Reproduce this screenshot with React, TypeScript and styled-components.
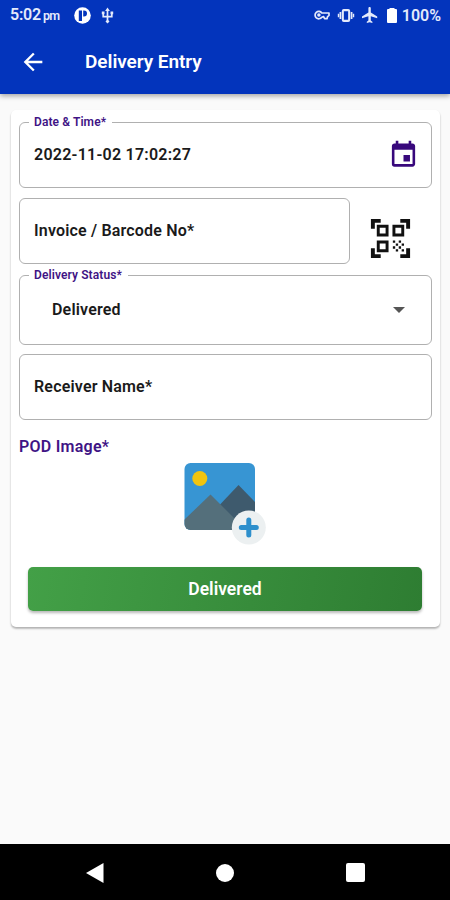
import React from "react";
import styled, { createGlobalStyle } from "styled-components";

const GlobalStyle = createGlobalStyle`
  * { box-sizing: border-box; }
  body { margin: 0; background: #fafafa; font-family: Roboto, "Liberation Sans", sans-serif; }
`;

const Screen = styled.div`
  width: 450px;
  height: 900px;
  display: flex;
  flex-direction: column;
  background: #fafafa;
  overflow: hidden;
`;

const Header = styled.header`
  height: 94px;
  flex: none;
  background: #0334bc;
  color: #fff;
  box-shadow: 0 2px 5px rgba(0, 0, 0, 0.35);
`;

const StatusBar = styled.div`
  height: 30px;
  display: flex;
  align-items: center;
  padding: 0 9px 0 10px;
  color: #e4eafb;
`;

const Clock = styled.span`
  font-size: 16px;
  font-weight: 600;
  line-height: 30px;
  padding-top: 1px;
  white-space: nowrap;
  width: 64px;
  letter-spacing: -0.2px;
`;

const Meridiem = styled.span`
  font-size: 12.5px;
  margin-left: 2px;
  letter-spacing: -0.7px;
`;

const StatusIcon = styled.svg<{ $gap?: number }>`
  flex: none;
  display: block;
  margin-left: ${(p) => p.$gap ?? 0}px;
`;

const Battery = styled.span`
  font-size: 16px;
  font-weight: 600;
  margin-left: 5px;
  letter-spacing: 0;
`;

const Spacer = styled.div`
  flex: 1;
`;

const AppBar = styled.div`
  height: 64px;
  display: flex;
  align-items: center;
  padding-left: 19px;
`;

const Title = styled.h1`
  margin: 0 0 0 38px;
  font-size: 19px;
  font-weight: 600;
  line-height: 28px;
  letter-spacing: -0.05px;
  white-space: nowrap;
`;

const Card = styled.main`
  margin: 16px 10px 0 11px;
  height: 517px;
  padding: 12px 8px 0;
  flex: none;
  display: flex;
  flex-direction: column;
  background: #fff;
  border-radius: 5px;
  box-shadow: 0 2px 2px rgba(0, 0, 0, 0.22), 0 1px 2px rgba(0, 0, 0, 0.1);
`;

const Row = styled.div`
  display: flex;
  align-items: center;
  margin-bottom: 11px;
`;

const Field = styled.div<{ $height: number; $width?: number; $gap?: number; $indent?: number; $end?: number }>`
  position: relative;
  flex: none;
  display: flex;
  align-items: center;
  justify-content: space-between;
  width: ${(p) => (p.$width ? `${p.$width}px` : "auto")};
  height: ${(p) => p.$height}px;
  margin-bottom: ${(p) => p.$gap ?? 0}px;
  padding: 0 ${(p) => p.$end ?? 12}px 1px ${(p) => p.$indent ?? 14}px;
  border: 1px solid #b0b0b0;
  border-radius: 6px;
`;

const FieldLabel = styled.span`
  position: absolute;
  left: 9px;
  top: -9px;
  padding: 0 6px 0 5px;
  background: #fff;
  color: #3f1485;
  font-size: 12px;
  font-weight: 600;
  line-height: 16px;
  letter-spacing: 0.1px;
  white-space: nowrap;
`;

const FieldText = styled.span`
  color: #1a1a1a;
  font-size: 16px;
  font-weight: 600;
  line-height: 20px;
  letter-spacing: 0.18px;
  white-space: nowrap;
`;

const DateText = styled(FieldText)`
  letter-spacing: 0.25px;
`;

const ScanButton = styled.button`
  margin: 14px 0 0 17px;
  padding: 0;
  border: 0;
  background: none;
  height: 47px;
  display: block;
`;

const SectionLabel = styled.div`
  margin-top: 17px;
  color: #3f1485;
  font-size: 16px;
  font-weight: 600;
  line-height: 20px;
  letter-spacing: 0.25px;
`;

const PictureButton = styled.button`
  align-self: center;
  margin: 5px 1px 0 0;
  padding: 0;
  border: 0;
  background: none;
  height: 83px;
  display: block;
`;

const SubmitButton = styled.button`
  margin: 22px 10px 0 9px;
  height: 44px;
  padding: 0;
  border: 0;
  border-radius: 5px;
  background: linear-gradient(100deg, #43a047, #2e7d32);
  box-shadow: 0 2px 3px rgba(0, 0, 0, 0.28);
  color: #fff;
  font-family: inherit;
  font-size: 17.5px;
  font-weight: 600;
`;

const NavBar = styled.nav`
  height: 56px;
  flex: none;
  margin-top: auto;
  background: #000;
  display: flex;
  justify-content: space-between;
  align-items: center;
  padding: 1px 85px 0 86px;
`;

export default function App() {
  return (
    <Screen>
      <GlobalStyle />
      <Header>
        <StatusBar>
          <Clock>5:02<Meridiem>pm</Meridiem></Clock>
          <StatusIcon width="17" height="17" viewBox="0 0 17 17">
            <circle cx="8.5" cy="8.5" r="8.3" fill="#fff" />
            <path d="M4.800 3.500H8v10.500H4.800zM9.200 3.500h.8a3 3 0 0 1 0 6H9.200z" fill="#0334bc" />
          </StatusIcon>
          <StatusIcon $gap={10} width="13" height="17" viewBox="0 0 13 17" fill="none" stroke="currentColor" strokeWidth="1.7">
            <path d="M6.5 3v12M2.200 6v3.600h8.600V6" />
            <path d="M6.500.5l2.400 3.400H4.100zM6.500 12.500l2 2-2 2-2-2zM.8 4.500h2.700v2.700H.8zM9.500 4.500h2.700v2.700H9.500z" fill="currentColor" stroke="none" />
          </StatusIcon>
          <Spacer />
          <StatusIcon width="16" height="10" viewBox="0 0 16 10" fill="none" stroke="currentColor" strokeWidth="1.7">
            <path d="M7.800 3A3.700 3.700 0 1 0 7.800 7.200L9.600 6.600 10.600 8.700h2.400L13.600 6.600 15 5.400V3z" strokeLinejoin="round" />
            <circle cx="4.900" cy="5" r=".9" />
          </StatusIcon>
          <StatusIcon $gap={7} width="18" height="13" viewBox="0 0 18 14" fill="none" stroke="currentColor">
            <rect x="5.600" y="1.200" width="6.800" height="11.600" rx="1" strokeWidth="2.200" />
            <path d="M3 3.200v7.600M15 3.200v7.600" strokeWidth="1.900" />
            <path d="M.9 5.200v3.600M17.100 5.200v3.600" strokeWidth="1.500" />
          </StatusIcon>
          <StatusIcon $gap={7} width="16" height="16" viewBox="2 2 20 20">
            <path d="M21 16v-2l-8-5V3.500c0-.83-.67-1.500-1.500-1.500S10 2.670 10 3.500V9l-8 5v2l8-2.500V19l-2 1.500V22l3.500-1 3.500 1v-1.500L13 19v-5.500l8 2.500z" fill="currentColor" />
          </StatusIcon>
          <StatusIcon $gap={9} width="10" height="15" viewBox="0 0 10 15">
            <path d="M2.500 1V0h5v1H9a1 1 0 0 1 1 1v12a1 1 0 0 1-1 1H1a1 1 0 0 1-1-1V2a1 1 0 0 1 1-1z" fill="#fff" />
          </StatusIcon>
          <Battery>100%</Battery>
        </StatusBar>
        <AppBar>
          <svg width="28" height="28" viewBox="0 0 24 24" fill="#fff">
            <path d="M20 11H7.830l5.590-5.590L12 4l-8 8 8 8 1.410-1.410L7.830 13H20v-2z" />
          </svg>
          <Title>Delivery Entry</Title>
        </AppBar>
      </Header>
      <Card>
        <Field $height={66} $gap={10}>
          <FieldLabel>Date &amp; Time*</FieldLabel>
          <DateText>2022-11-02 17:02:27</DateText>
          <svg width="31" height="32" viewBox="0 0 24 24" fill="#38087c">
            <path d="M17 12h-5v5h5v-5zM16 1v2H8V1H6v2H5c-1.110 0-1.990.9-1.990 2L3 19a2 2 0 0 0 2 2h14c1.100 0 2-.9 2-2V5c0-1.100-.9-2-2-2h-1V1h-2zm3 18H5V8h14v11z" />
          </svg>
        </Field>
        <Row>
          <Field $height={66} $width={331}>
            <FieldText>Invoice / Barcode No*</FieldText>
          </Field>
          <ScanButton aria-label="Scan barcode">
            <svg width="47" height="47" viewBox="0 0 24 24" fill="#111">
              <path d="M9.500 6.500v3h-3v-3h3M11 5H5v6h6V5zm-1.500 9.500v3h-3v-3h3M11 13H5v6h6v-6zm6.500-6.500v3h-3v-3h3M19 5h-6v6h6V5zM22 7h-2V4h-3V2h5v5zm0 15v-5h-2v3h-3v2h5zM2 22h5v-2H4v-3H2v5zM2 2v5h2V4h3V2H2z" />
              <path d="M13.200 13h1.200v1.200h-1.200zM16.200 13h1.200v1.200h-1.200zM14.700 14.500h1.200v1.200h-1.200zM17.700 14.500h1.200v1.200h-1.200zM13.200 16h1.200v1.200h-1.200zM16.200 16h1.200v1.200h-1.200zM14.700 17.500h1.200v1.200h-1.200zM17.700 17.500h1.200v1.200h-1.200z" />
            </svg>
          </ScanButton>
        </Row>
        <Field $height={70} $gap={9} $indent={32} $end={26}>
          <FieldLabel>Delivery Status*</FieldLabel>
          <FieldText>Delivered</FieldText>
          <svg width="12" height="6" viewBox="0 0 12 6">
            <path d="M0 0h12L6 6z" fill="#555" />
          </svg>
        </Field>
        <Field $height={66}>
          <FieldText>Receiver Name*</FieldText>
        </Field>
        <SectionLabel>POD Image*</SectionLabel>
        <PictureButton aria-label="Add image">
          <svg width="82" height="83" viewBox="0 0 82 83">
            <defs>
              <clipPath id="frame"><rect x="0.500" y="1" width="70.500" height="67" rx="6" /></clipPath>
            </defs>
            <g clipPath="url(#frame)">
              <rect y="1" width="71" height="67" fill="#3795d3" />
              <path d="M29 50L54.500 23 71 40v28H29z" fill="#3e5a6d" />
              <path d="M-1 59L26.500 32.500 62 68H-1z" fill="#546f7b" />
            </g>
            <circle cx="15.800" cy="16.500" r="7.500" fill="#f1c40f" />
            <circle cx="64.800" cy="65.500" r="17" fill="#ecf0f1" />
            <path d="M64.800 58v15M57.300 65.500h15" stroke="#2d8fcc" strokeWidth="5" strokeLinecap="round" />
          </svg>
        </PictureButton>
        <SubmitButton>Delivered</SubmitButton>
      </Card>
      <NavBar>
        <svg width="18" height="20" viewBox="0 0 18 20"><path d="M0 10L17.500 0v20z" fill="#fff" /></svg>
        <svg width="18" height="18" viewBox="0 0 18 18"><circle cx="9" cy="9" r="9" fill="#fff" /></svg>
        <svg width="19" height="19" viewBox="0 0 19 19"><rect width="19" height="19" rx="2" fill="#fff" /></svg>
      </NavBar>
    </Screen>
  );
}
